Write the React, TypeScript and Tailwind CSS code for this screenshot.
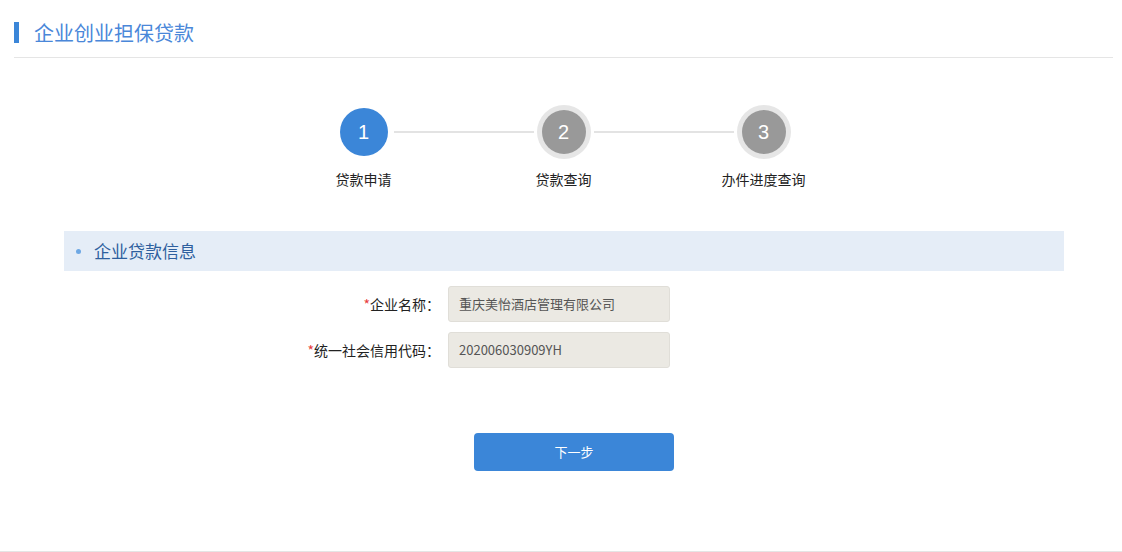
import React from 'react'

const steps = [
  { num: 1, label: '贷款申请', active: true },
  { num: 2, label: '贷款查询', active: false },
  { num: 3, label: '办件进度查询', active: false },
]

function StepCircle({ num, active }: { num: number; active: boolean }) {
  return (
    <div className="w-[54px] h-[54px] flex items-center justify-center shrink-0">
      {active ? (
        <div className="w-[48px] h-[48px] rounded-full bg-[#3b86d8] flex items-center justify-center text-white text-[20px] font-['Liberation_Sans',sans-serif]">
          {num}
        </div>
      ) : (
        <div className="w-[54px] h-[54px] rounded-full bg-[#e6e6e6] flex items-center justify-center">
          <div className="w-[44px] h-[44px] rounded-full bg-[#999999] flex items-center justify-center text-white text-[20px] font-['Liberation_Sans',sans-serif]">
            {num}
          </div>
        </div>
      )}
    </div>
  )
}

export default function App() {
  return (
    <div className="h-[552px] w-full bg-white border-b border-[#e5e5e5] font-['Noto_Sans_CJK_SC','Noto_Sans',sans-serif] text-[#333]">
      <div className="ml-[14px] mr-[9px]">
        {/* title */}
        <div className="flex items-center pt-[20px] pb-[12px] border-b border-[#e5e5e5]">
          <span className="w-[5px] h-[21px] bg-[#3b86d8]" />
          <h1 className="ml-[15px] text-[20px] leading-[25px] text-[#4a87d9]">企业创业担保贷款</h1>
        </div>

        {/* steps */}
        <div className="mt-[47px] flex justify-center items-center">
          <StepCircle num={1} active />
          <div className="w-[140px] h-[2px] mx-[3px] bg-[#e3e3e3]" />
          <StepCircle num={2} active={false} />
          <div className="w-[140px] h-[2px] mx-[3px] bg-[#e3e3e3]" />
          <StepCircle num={3} active={false} />
        </div>
        <div className="mt-[10px] flex justify-center">
          {steps.map((s) => (
            <div key={s.num} className="w-[200px] text-center text-[14px] leading-[20px] text-[#222]">
              {s.label}
            </div>
          ))}
        </div>

        {/* section */}
        <div className="ml-[50px] mr-[49px] mt-[42px]">
          <div className="h-[40px] bg-[#e5edf7] flex items-center pl-[12px]">
            <span className="w-[5px] h-[5px] rounded-full bg-[#6ea8e4]" />
            <span className="ml-[13px] text-[17px] leading-[24px] text-[#2e5f9e]">企业贷款信息</span>
          </div>

          <div className="mt-[15px] flex flex-col gap-[10px]">
            <div className="flex items-center">
              <label className="w-[376px] text-right text-[14px] leading-[20px] text-[#222]">
                <span className="text-[#e83c3c]">*</span>企业名称：
              </label>
              <div className="ml-[8px] w-[222px] h-[36px] rounded-[3px] border border-[#e0ded8] bg-[#ebe9e3] flex items-center pl-[10px] text-[13px] text-[#555]">
                重庆美怡酒店管理有限公司
              </div>
            </div>
            <div className="flex items-center">
              <label className="w-[376px] text-right text-[14px] leading-[20px] text-[#222]">
                <span className="text-[#e83c3c]">*</span>统一社会信用代码：
              </label>
              <div className="ml-[8px] w-[222px] h-[36px] rounded-[3px] border border-[#e0ded8] bg-[#ebe9e3] flex items-center pl-[10px] text-[13px] text-[#555]">
                202006030909YH
              </div>
            </div>
          </div>

          <div className="mt-[65px] ml-[410px]">
            <button className="w-[200px] h-[38px] rounded-[4px] bg-[#3b86d8] text-white text-[13px]">下一步</button>
          </div>
        </div>
      </div>
    </div>
  )
}
